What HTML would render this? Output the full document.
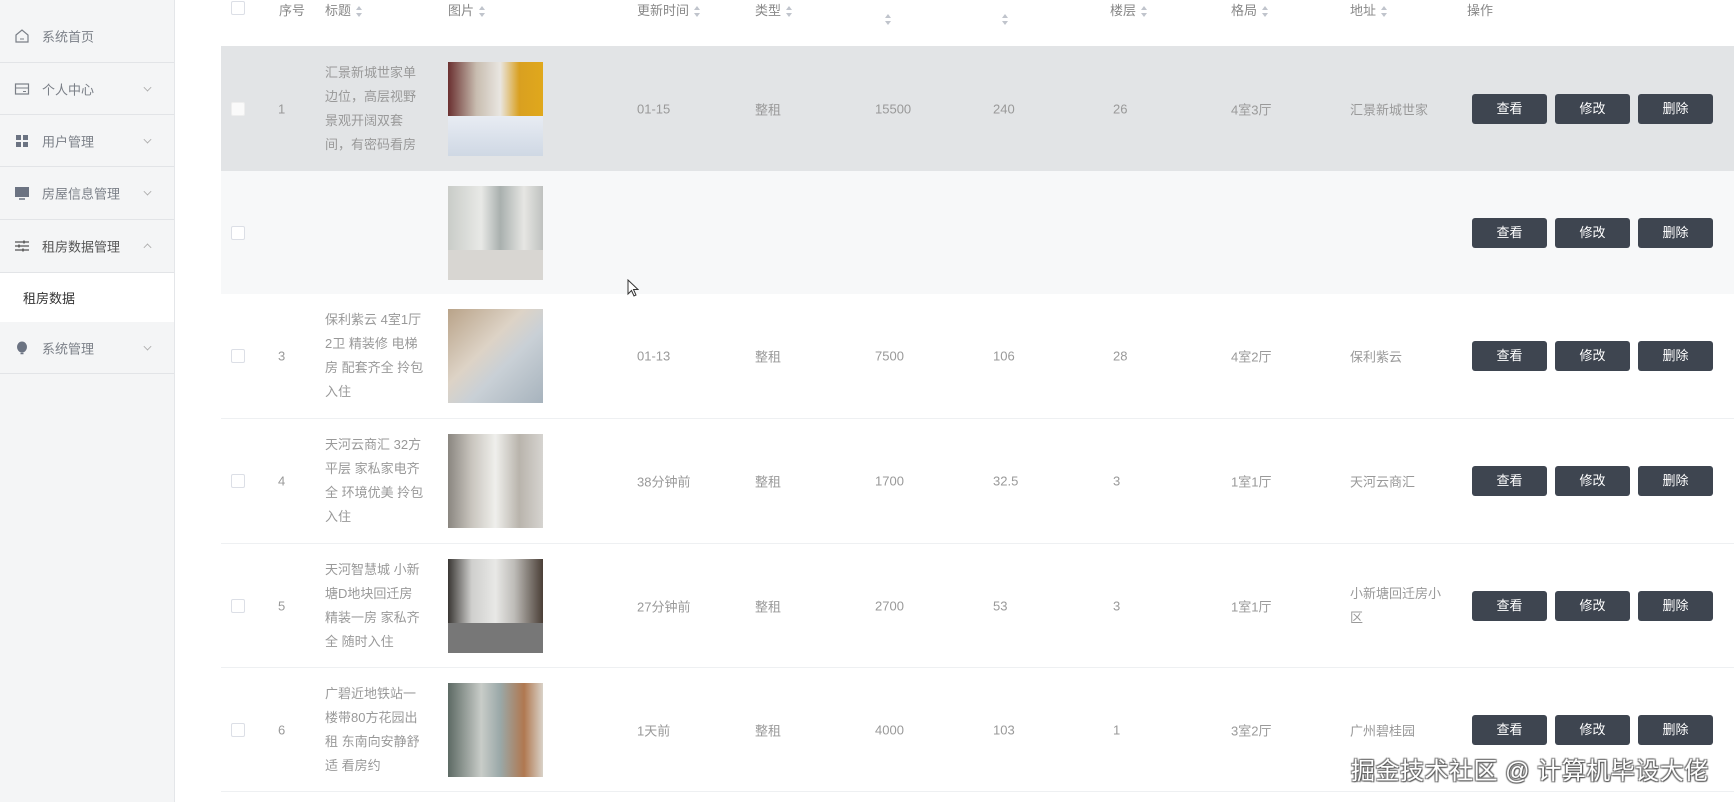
<!DOCTYPE html>
<html><head><meta charset="utf-8">
<style>
*{margin:0;padding:0;box-sizing:border-box}
body{width:1734px;height:802px;overflow:hidden;background:#fff;font-family:"Liberation Sans","Noto Sans CJK SC",sans-serif;position:relative;color:#888}
.sb{position:absolute;left:0;top:0;width:175px;height:802px;background:#f4f5f6;border-right:1px solid #e4e6e9}
.mi{position:absolute;left:0;width:174px;height:52px;border-bottom:1px solid #e2e4e7;font-size:13px;color:#7a7f87}
.mi .t{position:absolute;left:42px;top:50%;transform:translateY(-50%)}
.mi .ic{position:absolute;left:14px;top:50%;transform:translateY(-50%);width:16px;height:16px}
.mi .ch{position:absolute;left:144px;top:50%;margin-top:-5px;width:7px;height:7px;border-right:1px solid #aaa;border-bottom:1px solid #aaa;transform:rotate(45deg) scale(.8)}
.mi .ch.up{transform:rotate(-135deg) scale(.8);margin-top:-2px}
.sub{position:absolute;left:0;top:273px;width:174px;height:49px;background:#fff;font-size:13px;color:#333}
.hd{position:absolute;top:0px;font-size:13px;color:#888;white-space:nowrap}
.so{display:inline-block;vertical-align:middle;width:7px;height:11px;position:relative;margin-left:5px}
.so:before,.so:after{content:"";position:absolute;left:0;border-left:3.5px solid transparent;border-right:3.5px solid transparent}
.so:before{top:0;border-bottom:4px solid #c0c4cc}
.so:after{bottom:0;border-top:4px solid #c0c4cc}
.row{position:absolute;left:221px;width:1513px;border-bottom:1px solid #eef0f2}
.c{position:absolute;font-size:13px;color:#999;white-space:nowrap;transform:translateY(-50%);top:50%}
.ti{position:absolute;left:104px;width:110px;font-size:13px;line-height:24px;color:#999;top:50%;transform:translateY(-50%);white-space:nowrap}
.cb{position:absolute;left:10px;top:50%;margin-top:-7px;width:14px;height:14px;border:1px solid #dcdfe6;border-radius:2px;background:#fff}
.img{position:absolute;left:227px;top:50%;margin-top:-47px;width:95px;height:94px}
.btn{position:absolute;top:50%;margin-top:-15px;width:75px;height:30px;background:#3e4550;border-radius:3px;color:#fff;font-size:13px;text-align:center;line-height:30px}
</style></head><body>
<div class="sb">
  <div class="mi" style="top:10px;height:53px"><svg class="ic" viewBox="0 0 16 16"><path d="M2 7 L8 2 L14 7 V14 H2 Z" fill="none" stroke="#7a7f87" stroke-width="1.2"/><path d="M6 11h4" stroke="#7a7f87"/></svg><span class="t">系统首页</span></div>
  <div class="mi" style="top:63px"><svg class="ic" viewBox="0 0 16 16"><rect x="1.5" y="3" width="13" height="10" fill="none" stroke="#7a7f87" stroke-width="1.2"/><path d="M1.5 7h13M9 10.5h3" stroke="#7a7f87"/></svg><span class="t">个人中心</span><i class="ch"></i></div>
  <div class="mi" style="top:115px"><svg class="ic" viewBox="0 0 16 16"><rect x="2" y="2" width="5" height="5" fill="#6b7382"/><rect x="9" y="2" width="5" height="5" fill="#6b7382"/><rect x="2" y="9" width="5" height="5" fill="#6b7382"/><rect x="9" y="9" width="5" height="5" fill="#6b7382"/></svg><span class="t">用户管理</span><i class="ch"></i></div>
  <div class="mi" style="top:167px;height:53px"><svg class="ic" viewBox="0 0 16 16"><rect x="1" y="2" width="14" height="10" fill="#6b7382"/><path d="M5 14h6" stroke="#6b7382" stroke-width="1.5"/></svg><span class="t">房屋信息管理</span><i class="ch"></i></div>
  <div class="mi" style="top:220px;height:53px"><svg class="ic" viewBox="0 0 16 16"><path d="M1 4h14M1 8h14M1 12h14" stroke="#555" stroke-width="1.2"/><path d="M10 2.5v3M5 6.5v3M9 10.5v3" stroke="#555" stroke-width="1.5"/></svg><span class="t" style="color:#555">租房数据管理</span><i class="ch up"></i></div>
  <div class="sub"><span style="position:absolute;left:23px;top:15px">租房数据</span></div>
  <div class="mi" style="top:322px"><svg class="ic" viewBox="0 0 16 16"><ellipse cx="8" cy="7" rx="5" ry="5.5" fill="#6b7382"/><path d="M6.5 13.5h3" stroke="#6b7382" stroke-width="1.5"/></svg><span class="t">系统管理</span><i class="ch"></i></div>
</div>

<div class="cb" style="left:231px;top:1px;margin:0"></div>
<div class="hd" style="left:279px">序号</div>
<div class="hd" style="left:325px">标题<i class="so"></i></div>
<div class="hd" style="left:448px">图片<i class="so"></i></div>
<div class="hd" style="left:637px">更新时间<i class="so"></i></div>
<div class="hd" style="left:755px">类型<i class="so"></i></div>
<div class="hd" style="left:880px;top:11px"><i class="so"></i></div>
<div class="hd" style="left:997px;top:11px"><i class="so"></i></div>
<div class="hd" style="left:1110px">楼层<i class="so"></i></div>
<div class="hd" style="left:1231px">格局<i class="so"></i></div>
<div class="hd" style="left:1350px">地址<i class="so"></i></div>
<div class="hd" style="left:1467px">操作</div>

<div class="row" style="top:46px;height:125px;background:#e2e4e6;border:none">
  <div class="cb" style="background:#fafafa;border-color:#eee"></div><div class="c" style="left:57px">1</div>
  <div class="ti">汇景新城世家单<br>边位，高层视野<br>景观开阔双套<br>间，有密码看房</div>
  <div class="img" style="background:linear-gradient(90deg,#6a3030 0%,#c8bdb0 30%,#e9e6e1 55%,#d9a020 75%,#e0a81c 100%)"><div style="position:absolute;left:0;right:0;bottom:0;height:40px;background:linear-gradient(#e8ecf3,#cfd8e4)"></div></div>
  <div class="c" style="left:416px">01-15</div><div class="c" style="left:534px">整租</div><div class="c" style="left:654px">15500</div><div class="c" style="left:772px">240</div><div class="c" style="left:892px">26</div><div class="c" style="left:1010px">4室3厅</div><div class="c" style="left:1129px">汇景新城世家</div>
  <div class="btn" style="left:1251px">查看</div><div class="btn" style="left:1334px">修改</div><div class="btn" style="left:1417px">删除</div>
</div>
<div class="row" style="top:171px;height:123px;background:#f7f8f9;border:none">
  <div class="cb"></div>
  <div class="img" style="background:linear-gradient(90deg,#c9ccc8 0%,#e8e9e6 35%,#a9b0ae 55%,#e6e6e3 80%,#bfc1bf 100%)"><div style="position:absolute;left:0;right:0;bottom:0;height:30px;background:#d8d6d2"></div></div>
  <div class="btn" style="left:1251px">查看</div><div class="btn" style="left:1334px">修改</div><div class="btn" style="left:1417px">删除</div>
</div>
<div class="row" style="top:294px;height:125px">
  <div class="cb"></div><div class="c" style="left:57px">3</div>
  <div class="ti">保利紫云 4室1厅<br>2卫 精装修 电梯<br>房 配套齐全 拎包<br>入住</div>
  <div class="img" style="background:linear-gradient(135deg,#b9a389 0%,#ddd3c6 40%,#c9d0d6 60%,#a7b3bd 100%)"></div>
  <div class="c" style="left:416px">01-13</div><div class="c" style="left:534px">整租</div><div class="c" style="left:654px">7500</div><div class="c" style="left:772px">106</div><div class="c" style="left:892px">28</div><div class="c" style="left:1010px">4室2厅</div><div class="c" style="left:1129px">保利紫云</div>
  <div class="btn" style="left:1251px">查看</div><div class="btn" style="left:1334px">修改</div><div class="btn" style="left:1417px">删除</div>
</div>
<div class="row" style="top:419px;height:125px">
  <div class="cb"></div><div class="c" style="left:57px">4</div>
  <div class="ti">天河云商汇 32方<br>平层 家私家电齐<br>全 环境优美 拎包<br>入住</div>
  <div class="img" style="background:linear-gradient(90deg,#8a8680 0%,#c9c5be 25%,#efefec 50%,#b9b4ac 75%,#d6d4d0 100%)"></div>
  <div class="c" style="left:416px">38分钟前</div><div class="c" style="left:534px">整租</div><div class="c" style="left:654px">1700</div><div class="c" style="left:772px">32.5</div><div class="c" style="left:892px">3</div><div class="c" style="left:1010px">1室1厅</div><div class="c" style="left:1129px">天河云商汇</div>
  <div class="btn" style="left:1251px">查看</div><div class="btn" style="left:1334px">修改</div><div class="btn" style="left:1417px">删除</div>
</div>
<div class="row" style="top:544px;height:124px">
  <div class="cb"></div><div class="c" style="left:57px">5</div>
  <div class="ti">天河智慧城 小新<br>塘D地块回迁房<br>精装一房 家私齐<br>全 随时入住</div>
  <div class="img" style="background:linear-gradient(90deg,#3a3734 0%,#cfcfcd 25%,#e8e8e6 50%,#bdbbb7 70%,#4a3e36 100%)"><div style="position:absolute;left:0;right:0;bottom:0;height:30px;background:#777"></div></div>
  <div class="c" style="left:416px">27分钟前</div><div class="c" style="left:534px">整租</div><div class="c" style="left:654px">2700</div><div class="c" style="left:772px">53</div><div class="c" style="left:892px">3</div><div class="c" style="left:1010px">1室1厅</div><div class="c" style="left:1129px;line-height:24px">小新塘回迁房小<br>区</div>
  <div class="btn" style="left:1251px">查看</div><div class="btn" style="left:1334px">修改</div><div class="btn" style="left:1417px">删除</div>
</div>
<div class="row" style="top:668px;height:124px">
  <div class="cb"></div><div class="c" style="left:57px">6</div>
  <div class="ti">广碧近地铁站一<br>楼带80方花园出<br>租 东南向安静舒<br>适 看房约</div>
  <div class="img" style="background:linear-gradient(90deg,#5d6a64 0%,#c8ccc8 35%,#9aa8a8 55%,#b07850 80%,#d9d2c8 100%)"></div>
  <div class="c" style="left:416px">1天前</div><div class="c" style="left:534px">整租</div><div class="c" style="left:654px">4000</div><div class="c" style="left:772px">103</div><div class="c" style="left:892px">1</div><div class="c" style="left:1010px">3室2厅</div><div class="c" style="left:1129px">广州碧桂园</div>
  <div class="btn" style="left:1251px">查看</div><div class="btn" style="left:1334px">修改</div><div class="btn" style="left:1417px">删除</div>
</div>

<svg style="position:absolute;left:627px;top:279px" width="12" height="18" viewBox="0 0 12 18"><path d="M1 1 V15 L4.5 11.5 L7 17 L9 16 L6.5 10.5 L11 10.5 Z" fill="#fff" stroke="#333" stroke-width="1"/></svg>

<div style="position:absolute;left:1351px;top:751px;font-size:24px;letter-spacing:0.5px;color:#fff;white-space:nowrap;text-shadow:1px 1px 1px #555,-1px -1px 1px #777,1px -1px 1px #777,-1px 1px 1px #777">掘金技术社区 @ 计算机毕设大佬</div>
</body></html>
